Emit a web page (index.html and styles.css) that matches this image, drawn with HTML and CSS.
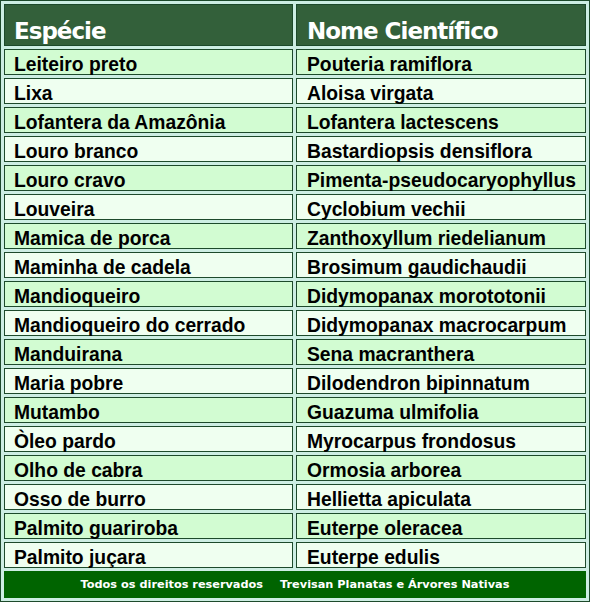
FILE: index.html
```html
<!DOCTYPE html>
<html lang="pt">
<head>
<meta charset="utf-8">
<title>Espécies</title>
<link rel="stylesheet" href="styles.css">
</head>
<body>
<table class="species">
  <thead>
    <tr><th class="col-a">Espécie</th><th class="col-b">Nome Científico</th></tr>
  </thead>
  <tbody>
    <tr class="odd"><td>Leiteiro preto</td><td>Pouteria ramiflora</td></tr>
    <tr class="even"><td>Lixa</td><td>Aloisa virgata</td></tr>
    <tr class="odd"><td>Lofantera da Amazônia</td><td>Lofantera lactescens</td></tr>
    <tr class="even"><td>Louro branco</td><td>Bastardiopsis densiflora</td></tr>
    <tr class="odd"><td>Louro cravo</td><td>Pimenta-pseudocaryophyllus</td></tr>
    <tr class="even"><td>Louveira</td><td>Cyclobium vechii</td></tr>
    <tr class="odd"><td>Mamica de porca</td><td>Zanthoxyllum riedelianum</td></tr>
    <tr class="even"><td>Maminha de cadela</td><td>Brosimum gaudichaudii</td></tr>
    <tr class="odd"><td>Mandioqueiro</td><td>Didymopanax morototonii</td></tr>
    <tr class="even"><td>Mandioqueiro do cerrado</td><td>Didymopanax macrocarpum</td></tr>
    <tr class="odd"><td>Manduirana</td><td>Sena macranthera</td></tr>
    <tr class="even"><td>Maria pobre</td><td>Dilodendron bipinnatum</td></tr>
    <tr class="odd"><td>Mutambo</td><td>Guazuma ulmifolia</td></tr>
    <tr class="even"><td>Òleo pardo</td><td>Myrocarpus frondosus</td></tr>
    <tr class="odd"><td>Olho de cabra</td><td>Ormosia arborea</td></tr>
    <tr class="even"><td>Osso de burro</td><td>Hellietta apiculata</td></tr>
    <tr class="odd"><td>Palmito guariroba</td><td>Euterpe oleracea</td></tr>
    <tr class="even"><td>Palmito juçara</td><td>Euterpe edulis</td></tr>
  </tbody>
  <tfoot>
    <tr><td colspan="2" class="footer"><span>Todos os direitos reservados</span><span class="sep"></span><span>Trevisan Planatas e Árvores Nativas</span></td></tr>
  </tfoot>
</table>
</body>
</html>
```
FILE: styles.css
```css
html, body {
  margin: 0;
  padding: 0;
  background: #ffffff;
}

.species {
  width: 590px;
  border: 1px solid #1d4a2b;
  border-spacing: 3px;
  background: #cdeee3;
  box-sizing: border-box;
  table-layout: fixed;
}

.species th,
.species td {
  box-sizing: border-box;
  border: 1px solid #1d4a2b;
}

.species th {
  background: #33603a;
  color: #ffffff;
  text-align: left;
  font-family: "DejaVu Sans", sans-serif;
  font-weight: bold;
  font-size: 23px;
  letter-spacing: -1px;
  height: 42px;
  padding: 13px 0 0 9px;
  line-height: 26px;
  vertical-align: top;
}

.species th.col-a {
  width: 289px;
}

.species th.col-b {
  padding-left: 10px;
}

.species tbody td {
  font-family: "Liberation Sans", Arial, sans-serif;
  font-weight: bold;
  font-size: 19.3px;
  color: #000000;
  height: 26px;
  padding: 6px 0 0 9px;
  line-height: 18px;
  vertical-align: top;
  white-space: nowrap;
}

.species tbody tr td + td {
  padding-left: 10px;
}

.species tr.odd td {
  background: #d2fcd2;
}

.species tr.even td {
  background: #effff0;
}

.species td.footer {
  background: #006400;
  border-color: #006400;
  color: #ffffff;
  font-family: "DejaVu Sans", sans-serif;
  font-weight: bold;
  font-size: 11.3px;
  text-align: center;
  height: 27px;
  padding: 0;
  vertical-align: middle;
}

.footer .sep {
  display: inline-block;
  width: 17px;
}
```
